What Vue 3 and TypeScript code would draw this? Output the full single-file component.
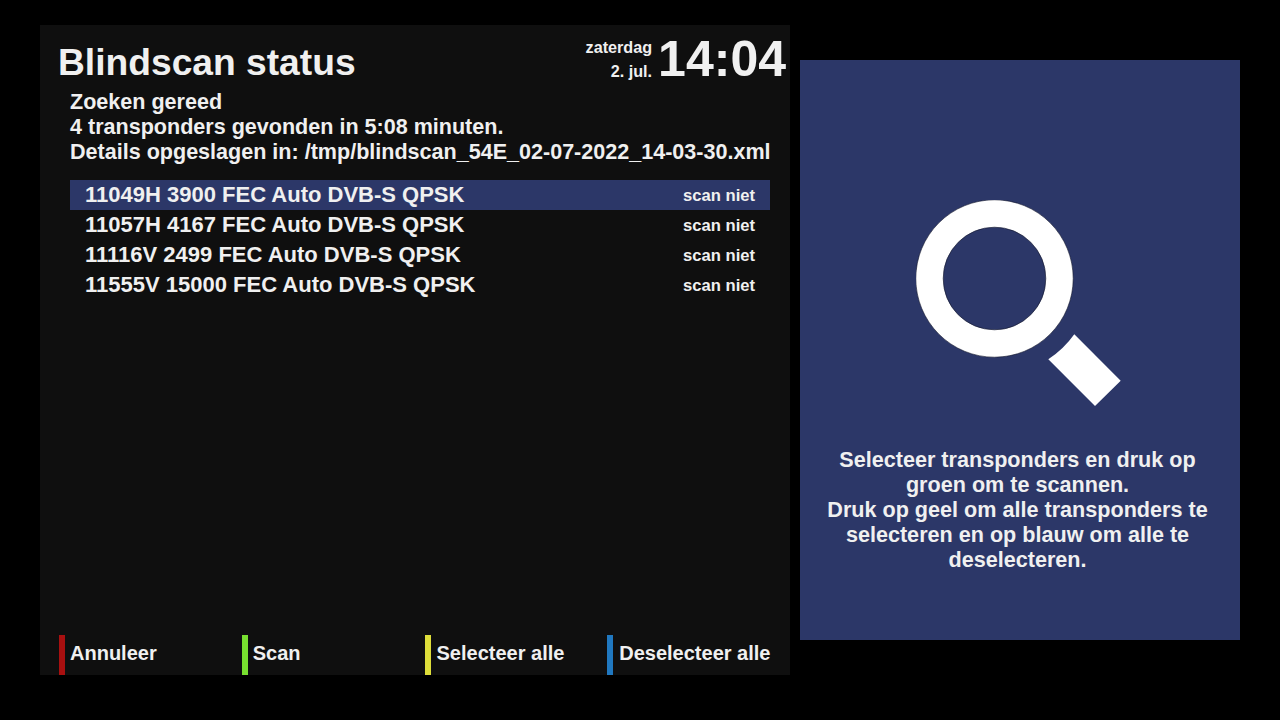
<template>
  <div class="screen">
    <section class="main-panel">
      <header class="head">
        <h1 class="title">Blindscan status</h1>
        <div class="clock">
          <div class="date">
            <span>zaterdag</span>
            <span>2. jul.</span>
          </div>
          <div class="time">14:04</div>
        </div>
      </header>

      <div class="status">
        <div v-for="line in statusLines" :key="line">{{ line }}</div>
      </div>

      <ul class="list">
        <li v-for="(row, i) in rows" :key="row" :class="{ active: i === 0 }">
          <span>{{ row }}</span>
          <span class="state">scan niet</span>
        </li>
      </ul>

      <footer class="buttons">
        <div v-for="btn in buttons" :key="btn.label" class="button">
          <i class="bar" :style="{ background: btn.color }"></i>
          <span class="label">{{ btn.label }}</span>
        </div>
      </footer>
    </section>

    <aside class="side-panel">
      <svg class="icon" width="206" height="207" viewBox="0 0 206 207">
        <circle cx="78.5" cy="78.5" r="65" fill="none" stroke="#fff" stroke-width="27.4" />
        <circle cx="78.5" cy="78.5" r="78.7" fill="none" stroke="#14182c" stroke-width="0.6" />
        <circle cx="78.5" cy="78.5" r="51.3" fill="none" stroke="#14182c" stroke-width="0.6" />
        <path d="M158.3 134.3 L204.7 180.7 L179 206 L132.3 159.3 A97 97 0 0 0 158.3 134.3 Z" fill="#fff" />
      </svg>
      <p class="help">
        Selecteer transponders en druk op groen om te scannen.<br />
        Druk op geel om alle transponders te selecteren en op blauw om alle te deselecteren.
      </p>
    </aside>
  </div>
</template>

<script setup lang="ts">
const statusLines = [
  "Zoeken gereed",
  "4 transponders gevonden in 5:08 minuten.",
  "Details opgeslagen in: /tmp/blindscan_54E_02-07-2022_14-03-30.xml",
];

const rows = [
  "11049H 3900 FEC Auto DVB-S QPSK",
  "11057H 4167 FEC Auto DVB-S QPSK",
  "11116V 2499 FEC Auto DVB-S QPSK",
  "11555V 15000 FEC Auto DVB-S QPSK",
];

const buttons = [
  { label: "Annuleer", color: "#a81010" },
  { label: "Scan", color: "#78e030" },
  { label: "Selecteer alle", color: "#dede3a" },
  { label: "Deselecteer alle", color: "#2078c0" },
];
</script>

<style>
html,
body {
  background: #000;
}
</style>

<style scoped>
.screen {
  display: flex;
  gap: 10px;
  width: 1280px;
  height: 720px;
  box-sizing: border-box;
  padding: 25px 40px 45px;
  background: #000;
  color: #f0f0f0;
  font-family: "Liberation Sans", Arial, sans-serif;
  font-weight: bold;
  overflow: hidden;
}

.main-panel {
  display: flex;
  flex-direction: column;
  width: 750px;
  height: 650px;
  background: #0f0f0f;
}

.head {
  display: flex;
  justify-content: space-between;
  height: 64px;
}

.title {
  margin: 17px 0 0 18px;
  font-size: 37.2px;
  line-height: 41px;
  font-weight: bold;
}

.clock {
  display: flex;
  margin-right: 4px;
}

.date {
  display: flex;
  flex-direction: column;
  align-items: flex-end;
  gap: 6px;
  margin: 13px 6px 0 0;
  font-size: 16.2px;
  line-height: 18px;
}

.time {
  margin-top: 6px;
  font-size: 50px;
  line-height: 57px;
}

.status {
  padding-left: 30px;
  font-size: 21.56px;
  line-height: 25px;
  white-space: nowrap;
}

.list {
  margin: 16px 20px 0 30px;
  padding: 0;
  list-style: none;
  font-size: 22px;
}

.list li {
  display: flex;
  justify-content: space-between;
  align-items: center;
  height: 30px;
  padding: 0 15px;
}

.list li.active {
  background: #2c3768;
}

.state {
  font-size: 16.6px;
  padding-top: 1px;
}

.buttons {
  display: flex;
  margin-top: auto;
  padding-left: 19px;
  font-size: 20px;
}

.button {
  display: flex;
  align-items: center;
  gap: 5px;
  width: 183px;
  height: 40px;
  white-space: nowrap;
}

.bar {
  align-self: stretch;
  width: 6px;
}

.label {
  padding-bottom: 4px;
}

.button:nth-child(n + 3) .label {
  margin-left: 1px;
}

.side-panel {
  display: flex;
  flex-direction: column;
  align-items: center;
  width: 440px;
  height: 580px;
  margin-top: 35px;
  box-sizing: border-box;
  padding: 140px 5px 0 0;
  background: #2c3768;
}

.icon {
  align-self: flex-start;
  margin-left: 116px;
}

.help {
  margin: 40px 0 0;
  width: 400px;
  font-size: 21.6px;
  line-height: 25px;
  text-align: center;
}
</style>
